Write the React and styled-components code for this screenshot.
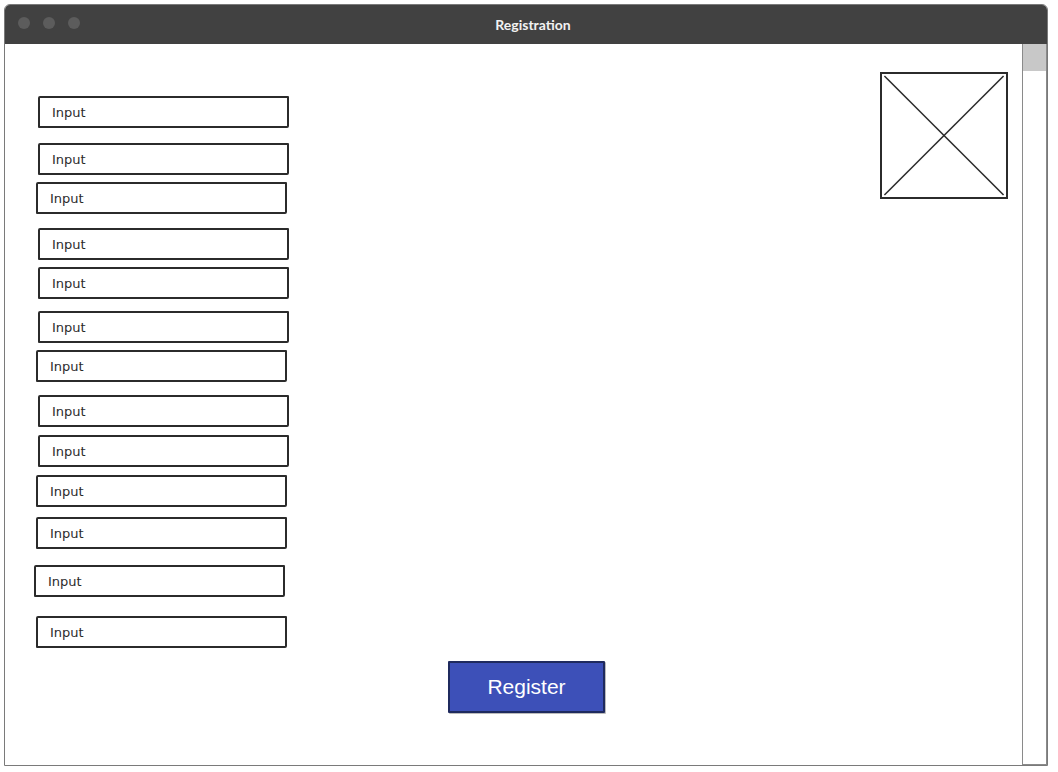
import styled, { createGlobalStyle } from "styled-components";

const GlobalStyle = createGlobalStyle`
	html, body {
		margin: 0;
		padding: 0;
		background: #ffffff;
	}
	body {
		font-family: "Liberation Sans", Arial, sans-serif;
	}
`;

// gap above each field and its small horizontal wobble, read off the mockup
const fields = [
	{ gap: 0, shift: 0 },
	{ gap: 15, shift: 0 },
	{ gap: 7, shift: -2 },
	{ gap: 14, shift: 0 },
	{ gap: 7, shift: 0 },
	{ gap: 12, shift: 0 },
	{ gap: 7, shift: -2 },
	{ gap: 13, shift: 0 },
	{ gap: 8, shift: 0 },
	{ gap: 8, shift: -2 },
	{ gap: 10, shift: -2 },
	{ gap: 16, shift: -4 },
	{ gap: 19, shift: -2 },
];

export default function App() {
	return (
		<>
			<GlobalStyle />
			<Page>
				<Window>
					<TitleBar>
						<Dots>
							<Dot />
							<Dot />
							<Dot />
						</Dots>
						<Title>Registration</Title>
					</TitleBar>
					<Body>
						<Main>
							<Form>
								{fields.map((f, i) => (
									<Field key={i} $gap={f.gap} $shift={f.shift}>
										Input
									</Field>
								))}
								<RegisterButton>Register</RegisterButton>
							</Form>
							<ImagePlaceholder viewBox="0 0 128 128">
								<line x1="2" y1="2" x2="126" y2="126" />
								<line x1="126" y1="2" x2="2" y2="126" />
							</ImagePlaceholder>
						</Main>
						<Scrollbar>
							<Thumb />
						</Scrollbar>
					</Body>
				</Window>
			</Page>
		</>
	);
}

const Page = styled.div`
	width: 1058px;
	height: 772px;
	padding: 4px 10px 6px 4px;
	box-sizing: border-box;
`;

const Window = styled.div`
	display: flex;
	flex-direction: column;
	width: 1044px;
	height: 762px;
	border: 1px solid #7a7a7a;
	border-radius: 6px 6px 0 0;
	box-sizing: border-box;
	overflow: hidden;
`;

const TitleBar = styled.div`
	position: relative;
	display: flex;
	align-items: center;
	justify-content: center;
	height: 39px;
	flex-shrink: 0;
	background: #414141;
`;

const Dots = styled.div`
	position: absolute;
	left: 13px;
	top: 12px;
	display: flex;
	gap: 13px;
`;

const Dot = styled.span`
	width: 12px;
	height: 12px;
	border-radius: 50%;
	background: #5c5c5c;
`;

const Title = styled.span`
	font-family: Lato, "Liberation Sans", sans-serif;
	font-weight: 700;
	font-size: 14px;
	color: #f2f2f2;
	margin-left: 14px;
`;

const Body = styled.div`
	display: flex;
	flex: 1;
	min-height: 0;
`;

const Main = styled.div`
	display: flex;
	flex: 1;
	align-items: flex-start;
	padding: 28px 14px 0 33px;
`;

const Form = styled.div`
	display: flex;
	flex-direction: column;
	align-items: flex-start;
	flex: 1;
	padding-top: 24px;
`;

const Field = styled.div`
	display: flex;
	align-items: center;
	width: 251px;
	height: 32px;
	margin-top: ${(p) => p.$gap}px;
	margin-left: ${(p) => p.$shift}px;
	padding-left: 12px;
	box-sizing: border-box;
	border: 2px solid #2b2b2b;
	border-radius: 2px 1px 2px 1px;
	font-family: "DejaVu Sans", sans-serif;
	font-size: 13px;
	color: #2b2b2b;
	background: #ffffff;
`;

const RegisterButton = styled.button`
	margin: 13px 0 0 410px;
	width: 157px;
	height: 52px;
	border: 2px solid #1f2a5e;
	border-radius: 1px;
	background: #3d50b8;
	color: #ffffff;
	font-family: "Liberation Sans", Arial, sans-serif;
	font-size: 21px;
	box-shadow: 1px 1px 0 #bbbbbb;
`;

const ImagePlaceholder = styled.svg`
	width: 128px;
	height: 127px;
	border: 2px solid #2b2b2b;
	box-sizing: border-box;
	flex-shrink: 0;

	line {
		stroke: #2b2b2b;
		stroke-width: 1.6;
	}
`;

const Scrollbar = styled.div`
	width: 25px;
	box-sizing: border-box;
	border-left: 1px solid #8a8a8a;
	border-right: 1px solid #8a8a8a;
	border-bottom: 1px solid #8a8a8a;
	margin-right: 0;
	background: #ffffff;
`;

const Thumb = styled.div`
	height: 27px;
	background: #c8c8c8;
`;
